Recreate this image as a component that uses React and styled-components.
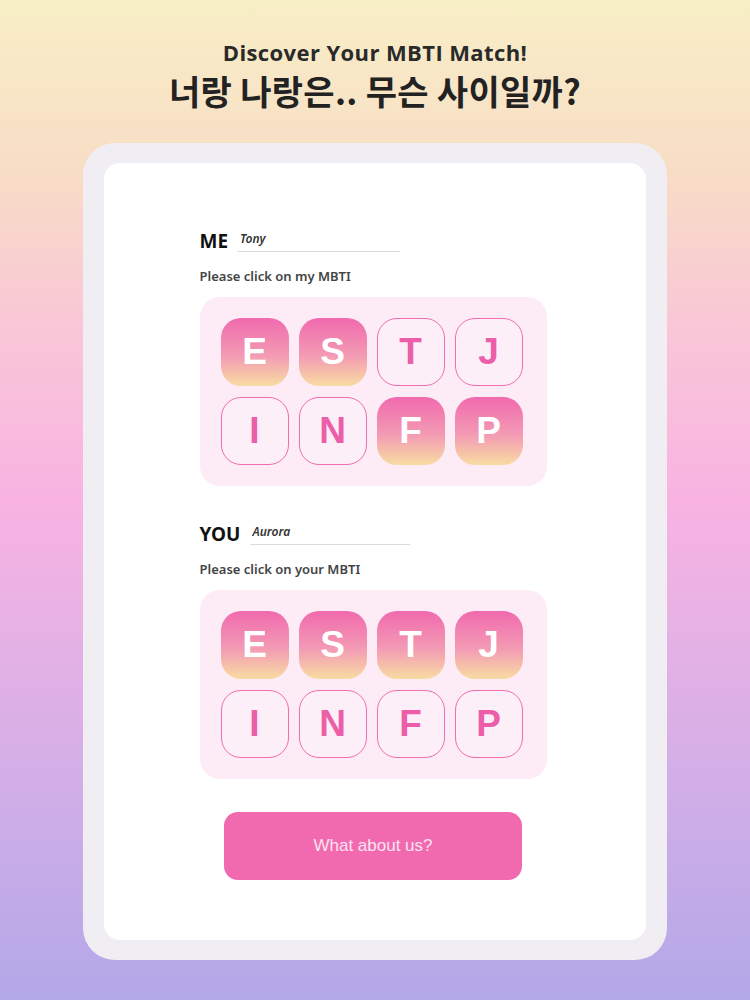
import React, { useState } from "react";
import styled, { createGlobalStyle } from "styled-components";

const GlobalStyle = createGlobalStyle`
  html, body {
    margin: 0;
    padding: 0;
  }
  body {
    font-family: "Noto Sans", "Noto Sans CJK KR", sans-serif;
  }
`;

const Page = styled.div`
  width: 750px;
  height: 1000px;
  box-sizing: border-box;
  padding-top: 36px;
  background: linear-gradient(
    180deg,
    #f8efc6 0%,
    #f8dcc6 18%,
    #f9c7d6 32%,
    #f8b3e2 50%,
    #ddb0e6 70%,
    #b3a8e8 100%
  );
  display: flex;
  flex-direction: column;
  align-items: center;
`;

const Subtitle = styled.h2`
  margin: 0;
  font-family: "Open Sans", "Noto Sans", sans-serif;
  font-size: 22px;
  font-weight: 700;
  letter-spacing: 0.4px;
  color: #2a2a2a;
  line-height: 32px;
`;

const Title = styled.h1`
  margin: 0;
  font-family: "Noto Sans CJK KR", sans-serif;
  font-size: 34px;
  font-weight: 700;
  letter-spacing: 0.3px;
  color: #222;
  line-height: 46px;
`;

const Frame = styled.div`
  margin-top: 29px;
  width: 584px;
  height: 817px;
  box-sizing: border-box;
  padding: 20px 21px;
  background: #f0eef2;
  border-radius: 32px;
  display: flex;
`;

const Card = styled.div`
  flex: 1;
  background: #fff;
  border-radius: 16px;
  display: flex;
  flex-direction: column;
  align-items: center;
  padding-top: 66px;
`;

const Section = styled.div`
  width: 347px;
  margin-left: -4px;
  display: flex;
  flex-direction: column;
`;

const NameRow = styled.div`
  display: flex;
  align-items: flex-end;
  gap: 10px;
  height: 24px;
`;

const Who = styled.span`
  font-size: 19px;
  font-weight: 700;
  color: #111;
  line-height: 24px;
`;

const NameInput = styled.input`
  width: ${(p) => p.$w}px;
  border: none;
  outline: none;
  border-bottom: 1px solid #dcdcdc;
  background: transparent;
  padding: 0 0 4px 2px;
  margin-bottom: 1px;
  font-family: "Noto Sans", sans-serif;
  font-style: italic;
  font-weight: 600;
  font-size: 12px;
  color: #333;
`;

const Hint = styled.p`
  margin: 14px 0 12px;
  font-size: 13px;
  font-weight: 600;
  color: #444;
  line-height: 18px;
`;

const Panel = styled.div`
  background: #fdebf6;
  border-radius: 20px;
  padding: 21px;
  display: grid;
  grid-template-columns: repeat(4, 68px);
  grid-auto-rows: 68px;
  gap: 11px 10px;
`;

const Letter = styled.button`
  box-sizing: border-box;
  border-radius: 20px;
  font-family: "Liberation Sans", Arial, sans-serif;
  font-size: 37px;
  font-weight: 700;
  cursor: pointer;
  padding: 0;
  display: flex;
  align-items: center;
  justify-content: center;
  border: ${(p) => (p.$on ? "none" : "1px solid #ef6db0")};
  color: ${(p) => (p.$on ? "#fff" : "#ec5ea8")};
  background: ${(p) =>
    p.$on
      ? "linear-gradient(180deg, #f06aae 0%, #f39ab4 55%, #f8dca2 100%)"
      : "#fdeff8"};
`;

const Gap = styled.div`
  height: ${(p) => p.$h}px;
`;

const Submit = styled.button`
  margin-top: 33px;
  margin-left: -4px;
  width: 298px;
  height: 68px;
  border: none;
  border-radius: 14px;
  background: #f16ab0;
  color: #fde3f1;
  font-family: "Liberation Sans", Arial, sans-serif;
  font-size: 17px;
  cursor: pointer;
`;

const LETTERS = ["E", "S", "T", "J", "I", "N", "F", "P"];

function MbtiPicker({ value, onChange }) {
  function pick(l) {
    const col = LETTERS.indexOf(l) % 4;
    const next = value.slice();
    next[col] = l;
    onChange(next);
  }
  return (
    <Panel>
      {LETTERS.map((l) => (
        <Letter key={l} $on={value.includes(l)} onClick={() => pick(l)}>
          {l}
        </Letter>
      ))}
    </Panel>
  );
}

export default function App() {
  const [me, setMe] = useState("Tony");
  const [you, setYou] = useState("Aurora");
  const [myType, setMyType] = useState(["E", "S", "F", "P"]);
  const [yourType, setYourType] = useState(["E", "S", "T", "J"]);

  return (
    <>
      <GlobalStyle />
      <Page>
        <Subtitle>Discover Your MBTI Match!</Subtitle>
        <Title>너랑 나랑은.. 무슨 사이일까?</Title>
        <Frame>
          <Card>
            <Section>
              <NameRow>
                <Who>ME</Who>
                <NameInput
                  $w={160}
                  value={me}
                  onChange={(e) => setMe(e.target.value)}
                />
              </NameRow>
              <Hint>Please click on my MBTI</Hint>
              <MbtiPicker value={myType} onChange={setMyType} />
              <Gap $h={36} />
              <NameRow>
                <Who>YOU</Who>
                <NameInput
                  $w={158}
                  value={you}
                  onChange={(e) => setYou(e.target.value)}
                />
              </NameRow>
              <Hint>Please click on your MBTI</Hint>
              <MbtiPicker value={yourType} onChange={setYourType} />
            </Section>
            <Submit>What about us?</Submit>
          </Card>
        </Frame>
      </Page>
    </>
  );
}
